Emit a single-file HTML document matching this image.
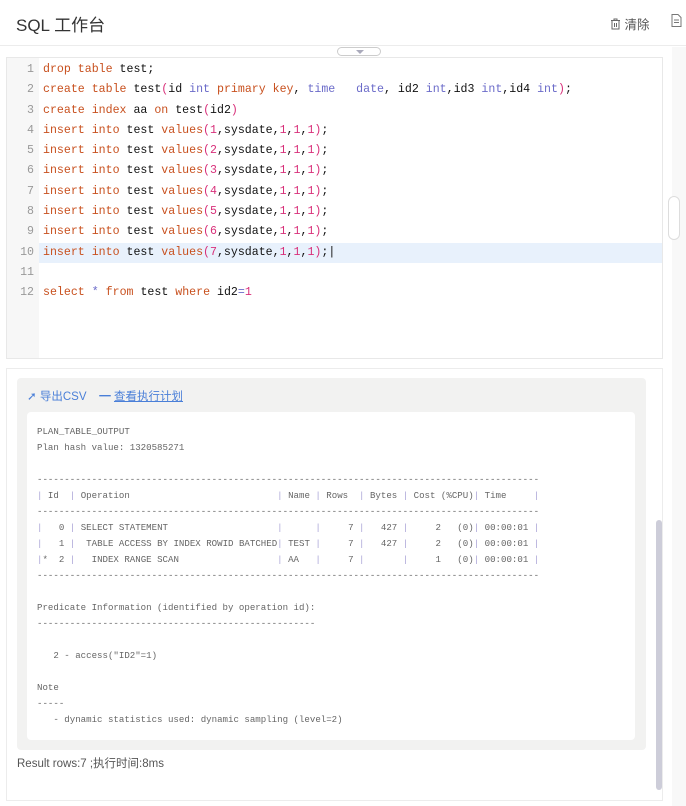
<!DOCTYPE html>
<html><head><meta charset="utf-8"><style>
*{margin:0;padding:0;box-sizing:border-box}
body{width:686px;height:806px;background:#fff;position:relative;overflow:hidden;font-family:"Liberation Sans","Noto Sans CJK SC",sans-serif}
.hdr{position:absolute;left:0;top:0;width:686px;height:46px;border-bottom:1px solid #ececec}
.title{position:absolute;left:16px;top:11px;font-size:17px;color:#333}
.clr{position:absolute;left:610px;top:14px;font-size:12.5px;color:#555}
.side{position:absolute;left:672px;top:47px;width:14px;height:759px;background:#f8f8f8}
.pill{position:absolute;left:337px;top:47px;width:44px;height:9px;border:1px solid #ccc;border-radius:5px;background:#fff}
.ed{position:absolute;left:6px;top:57px;width:657px;height:302px;border:1px solid #e8e8e8;background:#fff}
.gut{position:absolute;left:0;top:0;width:32px;height:100%;background:#f7f7f7}
.code{position:absolute;left:0;top:2px;width:100%;font-family:"Liberation Mono",monospace;font-size:11.6px;color:#111}
.ln{height:20.3px;line-height:20.3px;position:relative;white-space:pre}
.ln .n{position:absolute;left:0;width:27px;text-align:right;color:#999}
.ln .t{position:absolute;left:36px}
.hl{background:#e8f1fc;margin-left:32px}
.hl .n{left:-32px}.hl .t{left:4px}
.k{color:#c8501e}.y{color:#6b6bc9}.p{color:#d8307a}
.res{position:absolute;left:6px;top:368px;width:657px;height:433px;border:1px solid #ececec}
.panel{position:absolute;left:17px;top:378px;width:629px;height:372px;background:#f2f2f1;border-radius:4px}
.bar{position:absolute;left:10px;top:10px;font-size:11.5px;color:#4a7fd8}
.box{position:absolute;left:10px;top:34px;width:608px;height:328px;background:#fff;border-radius:4px}
pre{position:absolute;left:10px;top:12px;font-family:"Liberation Mono",monospace;font-size:9.1px;line-height:16px;color:#666}
pre b{font-weight:normal;color:#a9a3d6}
.sb{position:absolute;left:656px;top:520px;width:6px;height:270px;background:#cdcdd9;border-radius:3px}
.rr{position:absolute;left:17px;top:755px;font-size:11.5px;color:#555}
.rp{position:absolute;left:668px;top:196px;width:12px;height:44px;border:1px solid #ddd;border-radius:6px;background:#fff}
</style></head><body>
<div class="hdr"><div class="title">SQL 工作台</div>
<div class="clr"><svg width="11" height="12" viewBox="0 0 11 12" style="vertical-align:-1px"><path d="M1 2.5h9M4 2.5V1h3v1.5M2 2.5v8.5h7V2.5M4.5 5v4M6.5 5v4" stroke="#666" fill="none"/></svg> 清除</div>
<svg style="position:absolute;left:671px;top:14px" width="11" height="13" viewBox="0 0 11 13"><path d="M1 .5h6l3 3v9H1z M3 6h5M3 8.5h5" stroke="#777" fill="none"/></svg>
</div>
<div class="side"></div>
<div class="pill"><svg width="44" height="9" style="position:absolute;left:0;top:-1px"><path d="M18 3h8l-4 4z" fill="#aab"/></svg></div>
<div class="ed"><div class="gut"></div><div class="code">
<div class="ln"><span class="n">1</span><span class="t"><span class="k">drop table</span> test;</span></div>
<div class="ln"><span class="n">2</span><span class="t"><span class="k">create table</span> test<span class="p">(</span>id <span class="y">int</span> <span class="k">primary key</span>, <span class="y">time</span>   <span class="y">date</span>, id2 <span class="y">int</span>,id3 <span class="y">int</span>,id4 <span class="y">int</span><span class="p">)</span>;</span></div>
<div class="ln"><span class="n">3</span><span class="t"><span class="k">create index</span> aa <span class="k">on</span> test<span class="p">(</span>id2<span class="p">)</span></span></div>
<div class="ln"><span class="n">4</span><span class="t"><span class="k">insert into</span> test <span class="k">values</span><span class="p">(1</span>,sysdate,<span class="p">1</span>,<span class="p">1</span>,<span class="p">1)</span>;</span></div>
<div class="ln"><span class="n">5</span><span class="t"><span class="k">insert into</span> test <span class="k">values</span><span class="p">(2</span>,sysdate,<span class="p">1</span>,<span class="p">1</span>,<span class="p">1)</span>;</span></div>
<div class="ln"><span class="n">6</span><span class="t"><span class="k">insert into</span> test <span class="k">values</span><span class="p">(3</span>,sysdate,<span class="p">1</span>,<span class="p">1</span>,<span class="p">1)</span>;</span></div>
<div class="ln"><span class="n">7</span><span class="t"><span class="k">insert into</span> test <span class="k">values</span><span class="p">(4</span>,sysdate,<span class="p">1</span>,<span class="p">1</span>,<span class="p">1)</span>;</span></div>
<div class="ln"><span class="n">8</span><span class="t"><span class="k">insert into</span> test <span class="k">values</span><span class="p">(5</span>,sysdate,<span class="p">1</span>,<span class="p">1</span>,<span class="p">1)</span>;</span></div>
<div class="ln"><span class="n">9</span><span class="t"><span class="k">insert into</span> test <span class="k">values</span><span class="p">(6</span>,sysdate,<span class="p">1</span>,<span class="p">1</span>,<span class="p">1)</span>;</span></div>
<div class="ln hl"><span class="n">10</span><span class="t"><span class="k">insert into</span> test <span class="k">values</span><span class="p">(7</span>,sysdate,<span class="p">1</span>,<span class="p">1</span>,<span class="p">1)</span>;|</span></div>
<div class="ln"><span class="n">11</span><span class="t"></span></div>
<div class="ln"><span class="n">12</span><span class="t"><span class="k">select</span> <span class="y">*</span> <span class="k">from</span> test <span class="k">where</span> id2<span class="y">=</span><span class="p">1</span></span></div>
</div></div>
<div class="rp"></div>
<div class="res"></div>
<div class="panel">
<div class="bar">➚ <span style="color:#4a7fd8">导出CSV</span> &nbsp;&nbsp; <b style="font-weight:bold">━</b> <u>查看执行计划</u></div>
<div class="box"><pre>PLAN_TABLE_OUTPUT
Plan hash value: 1320585271

--------------------------------------------------------------------------------------------
<b>|</b> Id  <b>|</b> Operation                           <b>|</b> Name <b>|</b> Rows  <b>|</b> Bytes <b>|</b> Cost (%CPU)<b>|</b> Time     <b>|</b>
--------------------------------------------------------------------------------------------
<b>|</b>   0 <b>|</b> SELECT STATEMENT                    <b>|</b>      <b>|</b>     7 <b>|</b>   427 <b>|</b>     2   (0)<b>|</b> 00:00:01 <b>|</b>
<b>|</b>   1 <b>|</b>  TABLE ACCESS BY INDEX ROWID BATCHED<b>|</b> TEST <b>|</b>     7 <b>|</b>   427 <b>|</b>     2   (0)<b>|</b> 00:00:01 <b>|</b>
<b>|</b>*  2 <b>|</b>   INDEX RANGE SCAN                  <b>|</b> AA   <b>|</b>     7 <b>|</b>       <b>|</b>     1   (0)<b>|</b> 00:00:01 <b>|</b>
--------------------------------------------------------------------------------------------

Predicate Information (identified by operation id):
---------------------------------------------------

   2 - access("ID2"=1)

Note
-----
   - dynamic statistics used: dynamic sampling (level=2)</pre></div>
</div>
<div class="rr">Result rows:7 ;执行时间:8ms</div>
<div class="sb"></div>
</body></html>
